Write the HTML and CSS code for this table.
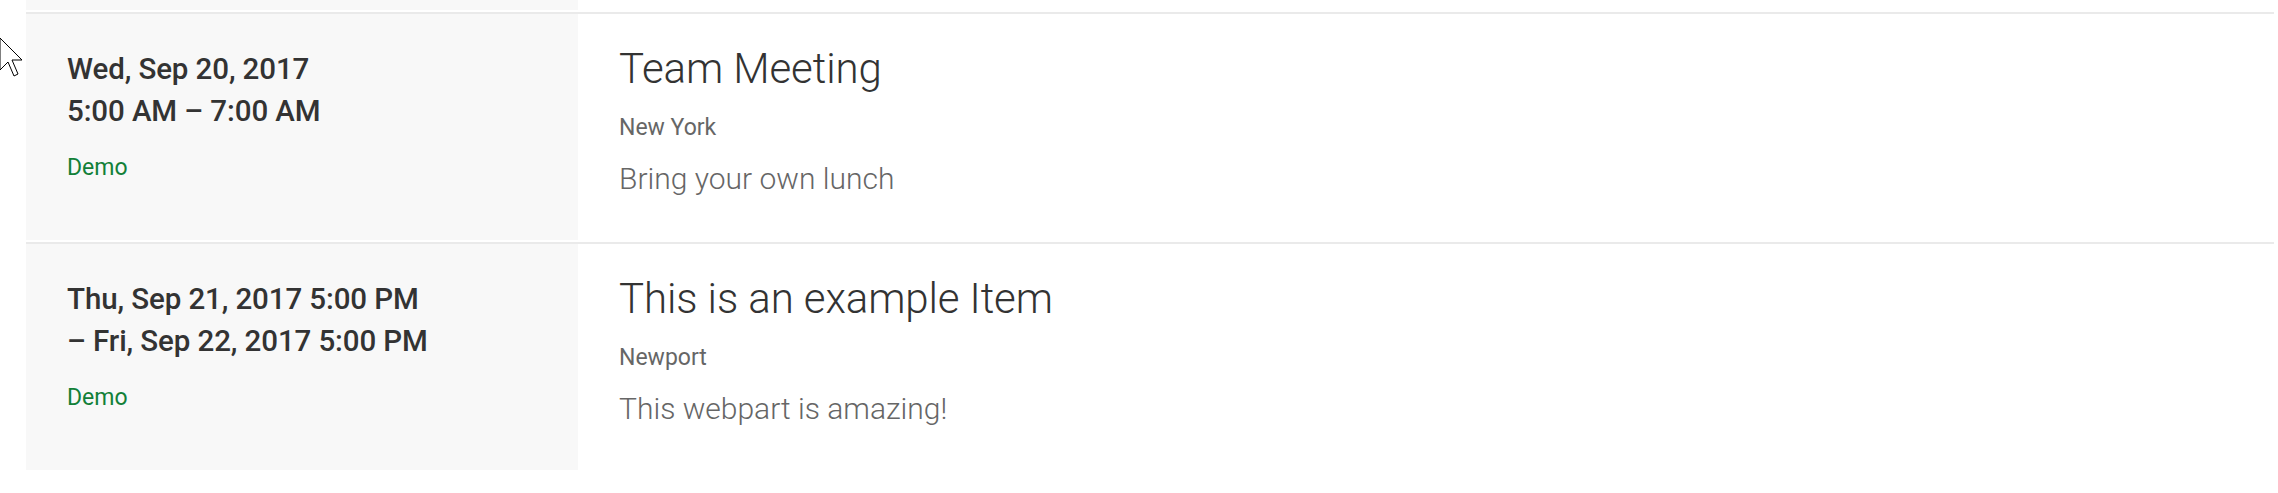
FILE: index.html
```html
<!DOCTYPE html>
<html lang="en">
<head>
<meta charset="utf-8">
<title>Events</title>
<link rel="stylesheet" href="styles.css">
</head>
<body>
<div class="events">
  <div class="event event-partial">
    <div class="date-col"></div>
    <div class="detail-col"></div>
  </div>
  <div class="event">
    <div class="date-col">
      <div class="when">Wed, Sep 20, 2017<br>5:00 AM – 7:00 AM</div>
      <div class="category">Demo</div>
    </div>
    <div class="detail-col">
      <h2 class="title">Team Meeting</h2>
      <div class="location">New York</div>
      <div class="desc">Bring your own lunch</div>
    </div>
  </div>
  <div class="event">
    <div class="date-col">
      <div class="when">Thu, Sep 21, 2017 5:00 PM<br>– Fri, Sep 22, 2017 5:00 PM</div>
      <div class="category">Demo</div>
    </div>
    <div class="detail-col">
      <h2 class="title">This is an example Item</h2>
      <div class="location">Newport</div>
      <div class="desc">This webpart is amazing!</div>
    </div>
  </div>
</div>
<svg class="cursor" width="24" height="40" viewBox="0 0 12 20" aria-hidden="true">
  <polygon points="0.5,0.5 0.5,16.5 4.5,12.5 7.5,19.5 9.5,18.5 6.5,11.5 11.5,11.5" fill="#ffffff" stroke="#000000" stroke-width="0.5" stroke-linejoin="miter"/>
</svg>
</body>
</html>
```

FILE: styles.css
```css
html, body {
  margin: 0;
  padding: 0;
  background: #ffffff;
}

body {
  font-family: Roboto, "Open Sans", "Liberation Sans", sans-serif;
  color: #333333;
  position: relative;
  overflow: hidden;
}

.events {
  padding: 0 4px 0 26px;
}

.event {
  display: grid;
  grid-template-columns: 552px 1fr;
  height: 226px;
  margin-top: 2px;
  border-top: 2px solid #eaeaea;
}

.event-partial {
  height: 10px;
  margin-top: 0;
  border-top: none;
}

.date-col {
  background: #f8f8f8;
  padding: 34px 41px 0 41px;
}

.detail-col {
  background: #ffffff;
  padding: 27px 41px 0 41px;
}

.event-partial .date-col,
.event-partial .detail-col {
  padding: 0;
}

.when {
  font-size: 29.5px;
  line-height: 42px;
  font-weight: 500;
  letter-spacing: -0.1px;
  color: #333333;
}

.category {
  margin-top: 21px;
  font-size: 23px;
  line-height: 30px;
  color: #128038;
}

.title {
  margin: 0;
  font-size: 42px;
  line-height: 56px;
  font-weight: 300;
  letter-spacing: -0.1px;
  color: #333333;
}

.location {
  margin-top: 16px;
  font-size: 23px;
  line-height: 30px;
  color: #666666;
}

.desc {
  margin-top: 16px;
  font-size: 30px;
  line-height: 40px;
  font-weight: 300;
  color: #666666;
}

.cursor {
  position: absolute;
  left: -1px;
  top: 37px;
}
```
